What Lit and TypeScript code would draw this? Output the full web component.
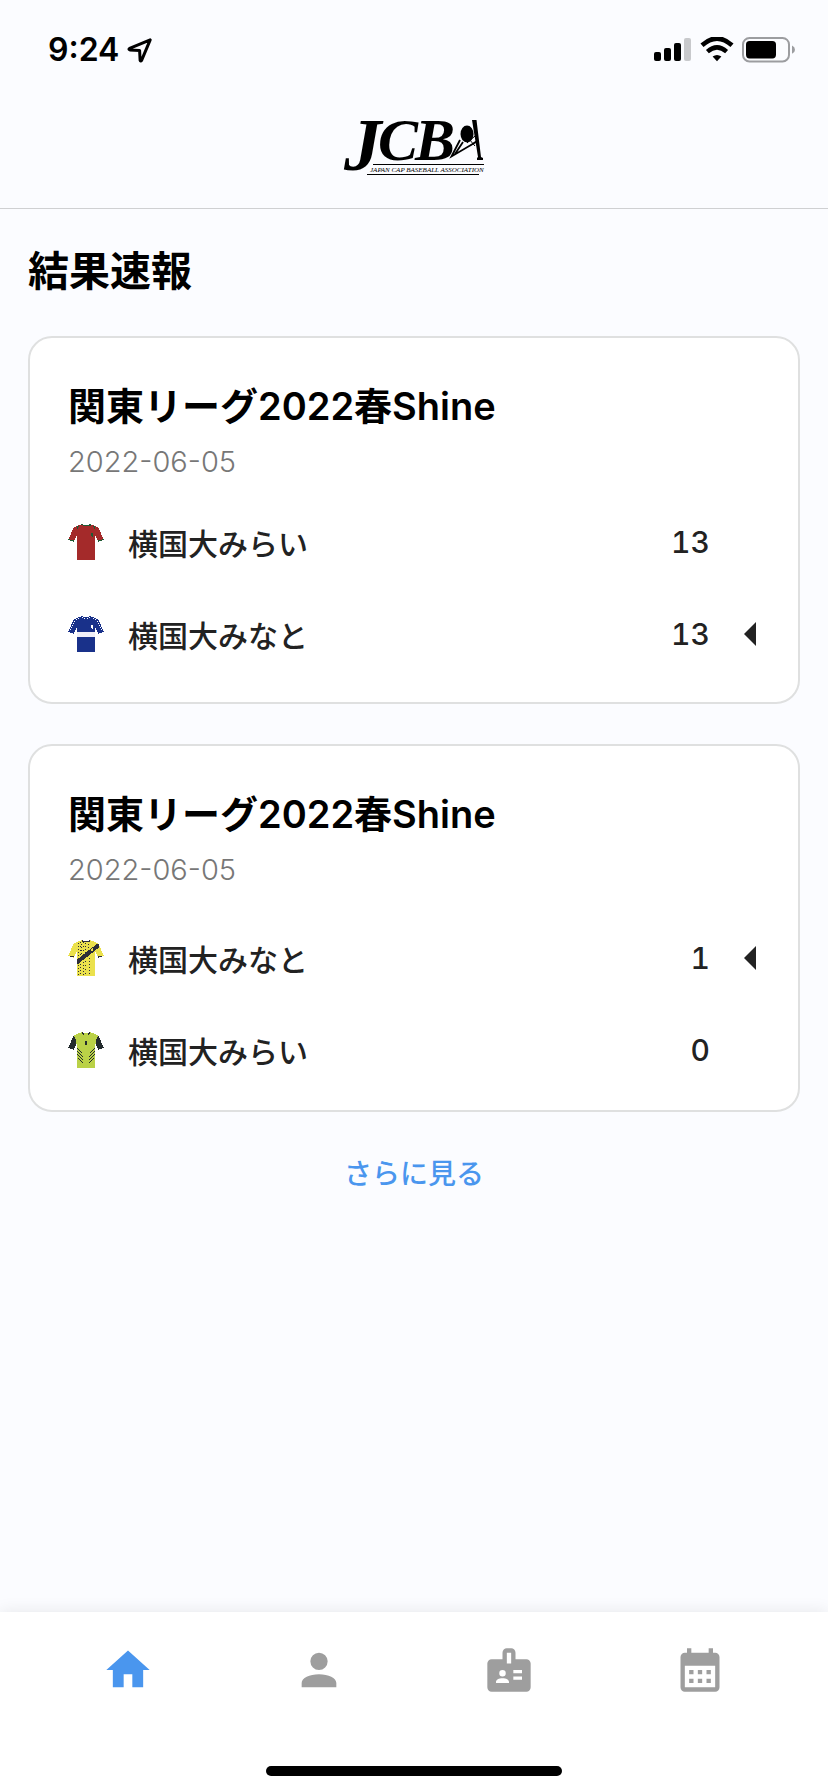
import { LitElement, html, css, svg, nothing } from "lit";
import { customElement, property } from "lit/decorators.js";

type Kit = "red" | "navy" | "yellow" | "lime";

interface Side {
  kit: Kit;
  name: string;
  score: number;
  winner?: boolean;
}

interface Match {
  league: string;
  date: string;
  sides: Side[];
}

const MATCHES: Match[] = [
  {
    league: "関東リーグ2022春Shine",
    date: "2022-06-05",
    sides: [
      { kit: "red", name: "横国大みらい", score: 13 },
      { kit: "navy", name: "横国大みなと", score: 13, winner: true },
    ],
  },
  {
    league: "関東リーグ2022春Shine",
    date: "2022-06-05",
    sides: [
      { kit: "yellow", name: "横国大みなと", score: 1, winner: true },
      { kit: "lime", name: "横国大みらい", score: 0 },
    ],
  },
];

const SHIRT =
  "M13 0H15V1H21V0H23V1H26V2H28V3H30V4H31V6H32V8H33V11H34V13H35V15H36V16H34V17H31V18H30V16H29V14H28V12H27V36H9V12H8V14H7V16H6V18H5V17H2V16H0V15H1V13H2V11H3V8H4V6H5V4H6V3H8V2H10V1H13Z";

const KITS = {
  red: svg`
    <path d=${SHIRT} fill="#a42a2a"/>
    <path d="M13 0h2v1h6V0h2v2h-2V1h0v1h-6V1h-2zM9 2h2v1h-1v2H9zM25 2h2v3h-1V3h-1zM0 15h2v1h4v2H5v-1H2v-1H0zM36 15h-2v1h-4v2h1v-1h3v-1h2zM23 9h2v4h-1v-1h-1z" fill="#1f5a35"/>`,
  navy: svg`
    <path d=${SHIRT} fill="#19318a"/>
    <path d="M9 16h18v5H9z" fill="#f0eff8"/>
    <path d="M14 1h1v1h-1zM16 2h1v1h-1zM19 2h1v1h-1zM21 1h1v1h-1zM23 9h2v4h-1v-1h-1zM8 3h1v1H8zM6 5h1v1H6zM5 7h1v1H5zM4 9h1v1H4zM3 11h1v1H3zM2 13h1v1H2zM10 2h1v1h-1zM27 3h1v1h-1zM29 5h1v1h-1zM30 7h1v1h-1zM31 9h1v1h-1zM32 11h1v1h-1zM33 13h1v1h-1zM25 2h1v1h-1z" fill="#fff"/>`,
  yellow: svg`
    <path d=${SHIRT} fill="#ebe14c"/>
    <path d="M10.500 3V19M13.500 4V18M17.500 3V15M20.500 4V13M12.500 24V35M10.500 25V36M15.500 22V36M21.500 18V36" stroke="#2d2e38" stroke-width="1" stroke-dasharray="1 2" fill="none"/>
    <path d="M12.500 2V17M15.500 2V15M17.500 21V36" stroke="#2d2e38" stroke-width="1" stroke-dasharray="1 3" fill="none"/>
    <path d="M9 19.500L29 4H31V7.500L10 24H9Z" fill="#2d2e38"/>
    <path d="M14 0h1v1h6V0h1v2h-8zM30 16h4v1h-3v1h-1zM2 16h4v1H2z" fill="#2d2e38"/>
    <path d="M23 9h1V8h1v3h-2z" fill="#ebe14c"/>`,
  lime: svg`
    <path d=${SHIRT} fill="#bad147"/>
    <path d="M5 4V6H4V8H3V11H2V13H1V15H0V16H2V17H5V18H6V16H7V14H8V7H7V5H6V4ZM31 4V6H32V8H33V11H34V13H35V15H36V16H34V17H31V18H30V16H29V14H28V7H29V5H30V4Z" fill="#232b2d"/>
    <path d="M14 0h1v1h1v1h4V1h1V0h1v2h-1v1h-1V2h-4v1h-1V2h-1zM17 9h2v4h-2z" fill="#232b2d"/>
    <path d="M9 16L14 21M9 19L15 25M9 22L15 28M10 26L15 31M27 16L22 21M27 19L21 25M27 22L21 28M26 26L21 31" stroke="#232b2d" stroke-width="1.3" fill="none"/>`,
};

@customElement("status-bar")
export class StatusBar extends LitElement {
  static styles = css`
    :host {
      display: flex;
      align-items: center;
      justify-content: space-between;
      height: 100px;
      padding: 0 32px 0 48px;
    }
    .left,
    .right {
      display: flex;
      align-items: center;
    }
    .left {
      gap: 8px;
    }
    .right {
      gap: 8px;
    }
    .time {
      font: 600 32px/36px Inter, "Liberation Sans", sans-serif;
      color: #000;
    }
    svg {
      display: block;
    }
  `;

  render() {
    return html`
      <div class="left">
        <span class="time">9:24</span>
        <svg width="26" height="26" viewBox="0 0 26 26" aria-hidden="true">
          <path d="M23.2 2.8L2.6 11.4Q1.2 12.4 2.8 12.9L12.6 13.4L13.1 23.2Q13.6 24.8 14.6 23.4Z"
            fill="none" stroke="#000" stroke-width="3" stroke-linejoin="round"/>
        </svg>
      </div>
      <div class="right">
        <svg width="38" height="26" viewBox="0 0 38 26" aria-hidden="true">
          <rect x="0" y="15" width="7" height="9" rx="2"/>
          <rect x="10" y="11" width="7" height="13" rx="2"/>
          <rect x="20" y="6" width="7" height="18" rx="2"/>
          <rect x="30" y="1" width="7" height="23" rx="2" fill="#c8c9cc"/>
        </svg>
        <svg width="34" height="26" viewBox="0 0 34 26" aria-hidden="true">
          <path d="M2 8.2Q17 -5.2 32 8.2" fill="none" stroke="#000" stroke-width="4.6"/>
          <path d="M7.4 14.6Q17 6.2 26.6 14.6" fill="none" stroke="#000" stroke-width="4.4"/>
          <path d="M12.6 19.6Q17 16.4 21.4 19.6L17 24.2Z"/>
        </svg>
        <svg width="54" height="26" viewBox="0 0 54 26" aria-hidden="true">
          <rect x="1" y="1" width="46" height="23.4" rx="6.5" fill="none" stroke="#9c9da0" stroke-width="2"/>
          <rect x="4" y="4" width="30" height="17.4" rx="3.6"/>
          <path d="M50 8.6Q53 10 53 12.7T50 16.8Z" fill="#9c9da0"/>
        </svg>
      </div>
    `;
  }
}

@customElement("match-card")
export class MatchCard extends LitElement {
  @property({ attribute: false }) match!: Match;

  static styles = css`
    :host {
      display: block;
    }
    .card {
      box-sizing: border-box;
      padding: 42px 42px 22px 38px;
      border: 2px solid #dfe0e0;
      border-radius: 24px;
      background: #fff;
    }
    .card.leading {
      padding-bottom: 14px;
    }
    .leading .sides {
      margin-top: 22px;
    }
    .league {
      margin: 0;
      font-size: 38px;
      font-weight: 600;
      line-height: 52px;
      color: #000;
    }
    .date {
      display: block;
      margin-top: 10px;
      font-size: 29px;
      font-weight: 300;
      line-height: 40px;
      color: #777;
    }
    .sides {
      margin: 14px 0 0;
      padding: 0;
      list-style: none;
    }
    .side {
      display: flex;
      align-items: center;
      height: 92px;
      font-size: 30px;
      font-weight: 500;
      color: #222;
    }
    .shirt {
      flex: none;
      margin-right: 24px;
    }
    .name {
      flex: 1;
    }
    .score {
      font-variant-numeric: tabular-nums;
    }
    .mark {
      display: flex;
      justify-content: flex-end;
      width: 46px;
    }
  `;

  render() {
    const { league, date, sides } = this.match;
    return html`
      <article class="card ${sides[0].winner ? "leading" : ""}">
        <h2 class="league">${league}</h2>
        <time class="date" datetime=${date}>${date}</time>
        <ul class="sides">
          ${sides.map(
            (s) => html`
              <li class="side">
                <svg class="shirt" width="36" height="36" viewBox="0 0 36 36"
                  shape-rendering="crispEdges" aria-hidden="true">${KITS[s.kit]}</svg>
                <span class="name">${s.name}</span>
                <span class="score">${s.score}</span>
                <span class="mark">
                  ${s.winner
                    ? html`<svg width="12" height="24" viewBox="0 0 12 24" role="img" aria-label="勝ち">
                        <path d="M12 0V24L0 12Z" fill="#222"/>
                      </svg>`
                    : nothing}
                </span>
              </li>
            `
          )}
        </ul>
      </article>
    `;
  }
}

const TABS = [
  {
    label: "ホーム",
    href: "#home",
    active: true,
    path: "M10,20V14H14V20H19V12H22L12,3L2,12H5V20H10Z",
  },
  {
    label: "選手",
    href: "#players",
    active: false,
    path: "M12,4A4,4 0 0,1 16,8A4,4 0 0,1 12,12A4,4 0 0,1 8,8A4,4 0 0,1 12,4M12,14C16.42,14 20,15.79 20,18V20H4V18C4,15.79 7.58,14 12,14Z",
  },
  {
    label: "会員証",
    href: "#badge",
    active: false,
    path: "M4,7H9V4A2,2 0 0,1 11,2H13A2,2 0 0,1 15,4V7H20A2,2 0 0,1 22,9V20A2,2 0 0,1 20,22H4A2,2 0 0,1 2,20V9A2,2 0 0,1 4,7M11,4V9H13V4ZM9,12A1.5,1.5 0 0,0 9,15A1.5,1.5 0 0,0 9,12M6,18H12V17.5C12,16.5 10.7,15.8 9,15.8C7.3,15.8 6,16.5 6,17.5ZM14,12V13.5H18V12ZM14,15V16.5H18V15Z",
  },
  {
    label: "日程",
    href: "#schedule",
    active: false,
    path: "M5,4H6V2H8V4H16V2H18V4H19A2,2 0 0,1 21,6V20A2,2 0 0,1 19,22H5A2,2 0 0,1 3,20V6A2,2 0 0,1 5,4M5,10V20H19V10ZM7,12H9V14H7ZM11,12H13V14H11ZM15,12H17V14H15ZM7,16H9V18H7ZM11,16H13V18H11ZM15,16H17V18H15Z",
  },
];

@customElement("tab-bar")
export class TabBar extends LitElement {
  static styles = css`
    :host {
      display: flex;
      flex-direction: column;
      justify-content: space-between;
      box-sizing: border-box;
      height: 180px;
      padding-bottom: 16px;
      background: #fff;
      box-shadow: 0 0 16px rgba(0, 0, 0, 0.09);
    }
    .tabs {
      display: flex;
      padding: 32px 33px 0;
    }
    .tab {
      flex: 1;
      display: flex;
      justify-content: center;
      color: #9e9e9e;
    }
    .tab.active {
      color: #4a96ee;
    }
    .indicator {
      align-self: center;
      width: 296px;
      height: 10px;
      border-radius: 5px;
      background: #000;
    }
  `;

  render() {
    return html`
      <nav class="tabs">
        ${TABS.map(
          (t) => html`
            <a class="tab ${t.active ? "active" : ""}" href=${t.href} aria-label=${t.label}>
              <svg width="52" height="52" viewBox="0 0 24 24" aria-hidden="true">
                <path d=${t.path} fill="currentColor" fill-rule="evenodd"/>
              </svg>
            </a>
          `
        )}
      </nav>
      <div class="indicator"></div>
    `;
  }
}

@customElement("app-root")
export class AppRoot extends LitElement {
  static styles = css`
    :host {
      display: flex;
      flex-direction: column;
      min-height: 100vh;
      background: #fbfcff;
      font-family: Inter, "Noto Sans CJK JP", sans-serif;
      color: #222;
    }
    .brand {
      display: flex;
      justify-content: center;
      padding: 12px 0 26px;
      border-bottom: 1px solid #cfd0d2;
    }
    .logo {
      display: block;
      overflow: visible;
      font-family: "Liberation Serif", serif;
      font-weight: 700;
      font-style: italic;
    }
    .logo-letters {
      font-size: 60px;
    }
    .logo-initial {
      font-size: 75px;
    }
    .logo-caption {
      font-size: 7px;
      font-weight: 400;
    }
    .content {
      flex: 1;
      display: flex;
      flex-direction: column;
      padding: 32px 28px 40px;
    }
    .heading {
      margin: 0 0 35px;
      font-size: 41px;
      font-weight: 600;
      line-height: 60px;
      color: #000;
    }
    .matches {
      display: flex;
      flex-direction: column;
      gap: 40px;
    }
    .more {
      align-self: center;
      margin-top: 38px;
      padding: 0;
      border: 0;
      background: none;
      font: 500 28px/44px "Noto Sans CJK JP", sans-serif;
      color: #4a96ee;
      cursor: pointer;
    }
  `;

  render() {
    return html`
      <status-bar></status-bar>
      <header class="brand">
        <svg class="logo" width="138" height="70" viewBox="0 0 138 70" role="img" aria-label="JCBA">
          <text class="logo-letters" y="48"><tspan class="logo-initial" x="-1" y="58">J</tspan><tspan x="33" y="48">C</tspan><tspan x="70">B</tspan></text>
          <path d="M127 8h4.500L136 45l2 1v2h-6v-2l1-1Z"/>
          <ellipse cx="122" cy="22" rx="6.500" ry="8.500"/>
          <path d="M115 28L106.500 44.500L131 30M118 30L110 42" fill="none" stroke="#000" stroke-width="1.800"/>
          <path d="M122 31l8-7M125 34l6-5M124 27l6 7" stroke="#000" stroke-width="1"/>
          <path d="M28 52.500H139M22 62.500H134" stroke="#000" stroke-width="1"/>
          <text class="logo-caption" x="25" y="60">JAPAN CAP BASEBALL ASSOCIATION</text>
        </svg>
      </header>
      <main class="content">
        <h1 class="heading">結果速報</h1>
        <div class="matches">
          ${MATCHES.map((m) => html`<match-card .match=${m}></match-card>`)}
        </div>
        <button class="more" type="button">さらに見る</button>
      </main>
      <tab-bar></tab-bar>
    `;
  }
}
